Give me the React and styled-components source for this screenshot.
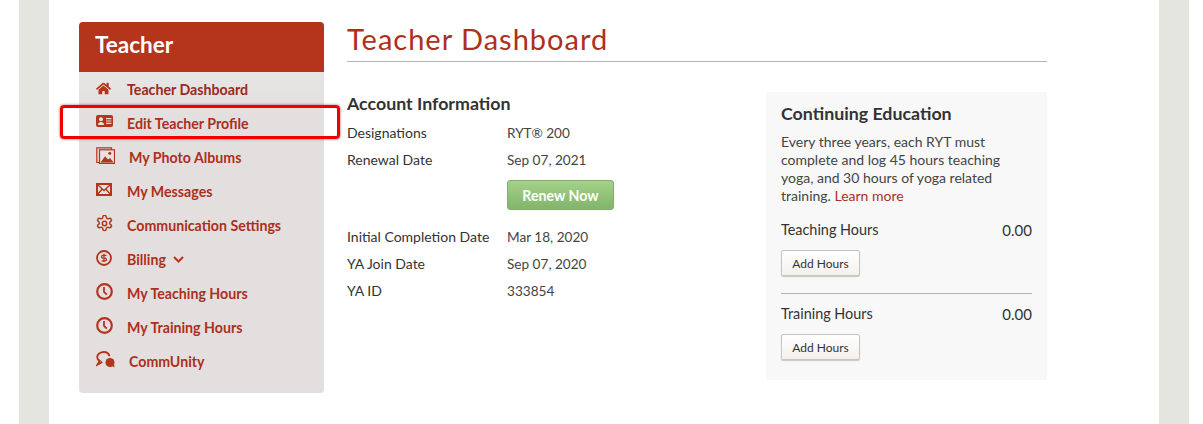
import React from 'react';
import styled, { createGlobalStyle } from 'styled-components';
import { FaHome } from 'react-icons/fa';

const colors = {
  rust: '#b5341c',
  link: '#ad2f1c',
  dark: '#333333',
  side: '#e5e5df',
};

const GlobalStyle = createGlobalStyle`
  html, body {
    margin: 0;
    padding: 0;
    background: #fff;
    font-family: Lato, "Open Sans", "Liberation Sans", sans-serif;
    overflow: hidden;
  }
  * { box-sizing: border-box; }
`;

const Page = styled.div`
  width: 1203px;
  height: 424px;
  overflow: hidden;
  padding-left: 19px;
`;

const Frame = styled.div`
  width: 1170px;
  height: 424px;
  border-left: 30px solid ${colors.side};
  border-right: 30px solid ${colors.side};
  background: #fff;
  padding: 22px 0 0 30px;
  display: flex;
  align-items: flex-start;
  gap: 23px;
`;

const Sidebar = styled.aside`
  position: relative;
  width: 245px;
  height: 371px;
  border-radius: 4px;
  background: linear-gradient(180deg, #ebebeb 0%, #e3dfdf 25%, #e3dfdf 100%);
`;

const SidebarHead = styled.h2`
  margin: 0;
  height: 50px;
  padding-left: 16px;
  background: ${colors.rust};
  border-radius: 4px 4px 0 0;
  color: #fff;
  font-size: 22.5px;
  font-weight: 700;
  line-height: 45px;
`;

const Menu = styled.ul`
  margin: 0;
  padding: 0;
  list-style: none;
`;

const MenuItem = styled.li`
  height: 34px;
  padding-left: 17px;
  display: flex;
  align-items: center;
  color: ${(p) => (p.$dark ? '#9c2a20' : colors.link)};
  font-size: 14.2px;
  font-weight: 700;
`;

const IconSlot = styled.span`
  width: ${(p) => p.$w || 31}px;
  height: 20px;
  flex: none;
  display: flex;
  align-items: flex-start;
  margin-top: ${(p) => p.$top}px;
  color: ${colors.rust};
  svg { display: block; }
`;

const Chevron = styled.svg`
  margin-left: 7px;
  margin-top: 1px;
`;

const Highlight = styled.div`
  position: absolute;
  left: -19px;
  top: 83px;
  width: 280px;
  height: 34px;
  border: 3px solid #f00000;
  border-radius: 4px;
  box-shadow: 0 0 3px rgba(120, 0, 0, 0.6);
`;

const Main = styled.main`
  width: 700px;
`;

const Title = styled.h1`
  margin: 0;
  height: 40px;
  border-bottom: 1px solid #b5b5b5;
  color: ${colors.link};
  font-size: 29px;
  font-weight: 400;
  line-height: 34px;
  letter-spacing: 1px;
`;

const Columns = styled.div`
  display: flex;
  justify-content: space-between;
  margin-top: 30px;
`;

const Account = styled.section`
  width: 400px;
`;

const SectionTitle = styled.h3`
  margin: 0 0 ${(p) => p.$gap || 0}px;
  color: ${colors.dark};
  font-size: 17.8px;
  font-weight: 700;
  line-height: 22px;
`;

const InfoRow = styled.div`
  display: flex;
  height: 27px;
  align-items: center;
  color: ${colors.dark};
  font-size: 14px;
`;

const InfoLabel = styled.span`
  width: 160px;
`;

const InfoValue = styled.span`
  color: #444;
  font-size: 13.6px;
`;

const ButtonRow = styled.div`
  padding: 7px 0 13px 160px;
`;

const RenewButton = styled.button`
  display: block;
  width: 107px;
  height: 30px;
  padding: 0;
  border: 1px solid #86ab6e;
  border-radius: 3px;
  background: linear-gradient(180deg, #a3d187 0%, #83b46c 100%);
  color: #fff;
  font-family: inherit;
  font-size: 14.2px;
  font-weight: 700;
`;

const Panel = styled.section`
  width: 281px;
  height: 288px;
  background: #f8f8f8;
  padding: 10px 15px 0;
`;

const PanelText = styled.p`
  margin: 9px 0 0;
  max-width: 235px;
  color: #444;
  font-size: 14px;
  line-height: 18px;
`;

const PanelLink = styled.a`
  color: ${colors.link};
`;

const HoursRow = styled.div`
  display: flex;
  justify-content: space-between;
  color: ${colors.dark};
  font-size: 14.4px;
  line-height: 18px;
  margin-top: ${(p) => p.$top}px;
`;

const HoursValue = styled.span`
  font-size: 15px;
`;

const AddButton = styled.button`
  display: block;
  width: 79px;
  height: 26px;
  margin-top: 11px;
  padding: 0;
  border: 1px solid #c9c4bd;
  border-radius: 2px;
  background: linear-gradient(180deg, #ffffff 0%, #f4f1ed 100%);
  box-shadow: 0 1px 1px rgba(0, 0, 0, 0.2);
  color: ${colors.dark};
  font-family: inherit;
  font-size: 12px;
`;

const Divider = styled.hr`
  margin: 17px 0 0;
  border: 0;
  border-top: 1px solid #b5b5b5;
`;

const IdCardIcon = () => (
  <svg width="17" height="12" viewBox="0 0 17 12">
    <rect width="17" height="12" rx="2" fill="currentColor" />
    <circle cx="5" cy="4.2" r="2" fill="#e6e2e2" />
    <path d="M2 10c0-2 1.3-3 3-3s3 1 3 3z" fill="#e6e2e2" />
    <path d="M10 3.6h5.4M10 6h5.4M10 8.4h5.4" stroke="#e6e2e2" strokeWidth="1.1" />
  </svg>
);

const PhotoIcon = () => (
  <svg width="19" height="17" viewBox="0 0 19 17">
    <path d="M3.5 15.5H.8V.8h14.7v2" fill="none" stroke="currentColor" strokeWidth="1.2" />
    <rect x="3.5" y="2.8" width="15" height="13.6" fill="#e6e2e2" stroke="currentColor" strokeWidth="1.2" />
    <circle cx="13.8" cy="6.3" r="1.5" fill="currentColor" />
    <path d="M4.5 15.4l4.6-6.2 2.9 3.2 2-1.5 3.6 4.5z" fill="currentColor" />
  </svg>
);

const MailIcon = () => (
  <svg width="16" height="13" viewBox="0 0 16 13">
    <rect x="1" y="1" width="14" height="11" fill="none" stroke="currentColor" strokeWidth="2" />
    <path d="M1.5 1.5L8 7.5l6.5-6M1.5 11.5l4.7-5.5M14.5 11.5L9.8 6" fill="none" stroke="currentColor" strokeWidth="1.3" />
  </svg>
);

const GearIcon = () => (
  <svg width="17" height="17" viewBox="1 1 22 22" fill="none" stroke="currentColor" strokeWidth="1.9">
    <path d="M12.2 1.5h-.4a2 2 0 0 0-2 2v.2a2 2 0 0 1-1 1.7l-.4.2a2 2 0 0 1-2 0l-.2-.1a2 2 0 0 0-2.7.7l-.2.4a2 2 0 0 0 .7 2.7l.2.1a2 2 0 0 1 1 1.7v.5a2 2 0 0 1-1 1.7l-.2.1a2 2 0 0 0-.7 2.7l.2.4a2 2 0 0 0 2.7.7l.2-.1a2 2 0 0 1 2 0l.4.2a2 2 0 0 1 1 1.7v.2a2 2 0 0 0 2 2h.4a2 2 0 0 0 2-2v-.2a2 2 0 0 1 1-1.7l.4-.2a2 2 0 0 1 2 0l.2.1a2 2 0 0 0 2.7-.7l.2-.4a2 2 0 0 0-.7-2.7l-.2-.1a2 2 0 0 1-1-1.7v-.5a2 2 0 0 1 1-1.7l.2-.1a2 2 0 0 0 .7-2.7l-.2-.4a2 2 0 0 0-2.7-.7l-.2.1a2 2 0 0 1-2 0l-.4-.2a2 2 0 0 1-1-1.7v-.2a2 2 0 0 0-2-2z" />
    <circle cx="12" cy="12" r="2.8" />
  </svg>
);

const DollarIcon = () => (
  <svg width="16" height="16" viewBox="0 0 16 16" fill="none" stroke="currentColor">
    <circle cx="8" cy="8" r="7" strokeWidth="1.8" />
    <path d="M10.5 5.4H6.9a1.3 1.3 0 0 0 0 2.7h2.2a1.3 1.3 0 0 1 0 2.7H5.5M8 3.8v8.4" strokeWidth="1.3" />
  </svg>
);

const ClockIcon = () => (
  <svg width="17" height="17" viewBox="0 0 17 17" fill="none" stroke="currentColor">
    <circle cx="8.5" cy="8.5" r="7.3" strokeWidth="2.2" />
    <path d="M8 4v4.8l2.8 2.8" strokeWidth="1.8" />
  </svg>
);

const ChatIcon = () => (
  <svg width="19" height="17" viewBox="0 0 19 17">
    <path d="M13.5 5.2C12.8 2.6 10.6 1 7.8 1 4.2 1 1.2 3.2 1.2 6c0 1.6 1 3 2.5 3.9L1.500 13.500l4.800-2.700" fill="none" stroke="currentColor" strokeWidth="1.9" />
    <circle cx="14" cy="11.5" r="4.5" fill="currentColor" />
    <path d="M16 15l2.500 1.500-.5-3.500z" fill="currentColor" />
  </svg>
);

const menuItems = [
  { label: 'Teacher Dashboard', icon: <FaHome size={15} />, dark: true, top: 3 },
  { label: 'Edit Teacher Profile', icon: <IdCardIcon />, top: 4 },
  { label: 'My Photo Albums', icon: <PhotoIcon />, slot: 33, top: 0 },
  { label: 'My Messages', icon: <MailIcon />, top: 4 },
  { label: 'Communication Settings', icon: <GearIcon />, top: 0 },
  { label: 'Billing', icon: <DollarIcon />, chevron: true, top: 2 },
  { label: 'My Teaching Hours', icon: <ClockIcon />, top: -1 },
  { label: 'My Training Hours', icon: <ClockIcon />, top: -1 },
  { label: 'CommUnity', icon: <ChatIcon />, slot: 33, top: 0 },
];

const App = () => (
  <Page>
    <GlobalStyle />
    <Frame>
      <Sidebar>
        <SidebarHead>Teacher</SidebarHead>
        <Menu>
          {menuItems.map((item) => (
            <MenuItem key={item.label} $dark={item.dark}>
              <IconSlot $w={item.slot} $top={item.top}>{item.icon}</IconSlot>
              {item.label}
              {item.chevron && (
                <Chevron width="11" height="7" viewBox="0 0 11 7" fill="none" stroke={colors.rust} strokeWidth="2">
                  <path d="M1 1l4.500 4.500L10 1" />
                </Chevron>
              )}
            </MenuItem>
          ))}
        </Menu>
        <Highlight />
      </Sidebar>
      <Main>
        <Title>Teacher Dashboard</Title>
        <Columns>
          <Account>
            <SectionTitle $gap={5}>Account Information</SectionTitle>
            <InfoRow><InfoLabel>Designations</InfoLabel><InfoValue>RYT® 200</InfoValue></InfoRow>
            <InfoRow><InfoLabel>Renewal Date</InfoLabel><InfoValue>Sep 07, 2021</InfoValue></InfoRow>
            <ButtonRow><RenewButton>Renew Now</RenewButton></ButtonRow>
            <InfoRow><InfoLabel>Initial Completion Date</InfoLabel><InfoValue>Mar 18, 2020</InfoValue></InfoRow>
            <InfoRow><InfoLabel>YA Join Date</InfoLabel><InfoValue>Sep 07, 2020</InfoValue></InfoRow>
            <InfoRow><InfoLabel>YA ID</InfoLabel><InfoValue>333854</InfoValue></InfoRow>
          </Account>
          <Panel>
            <SectionTitle>Continuing Education</SectionTitle>
            <PanelText>
              Every three years, each RYT must complete and log 45 hours teaching yoga, and 30 hours of yoga related training. <PanelLink>Learn more</PanelLink>
            </PanelText>
            <HoursRow $top={16}><span>Teaching Hours</span><HoursValue>0.00</HoursValue></HoursRow>
            <AddButton>Add Hours</AddButton>
            <Divider />
            <HoursRow $top={11}><span>Training Hours</span><HoursValue>0.00</HoursValue></HoursRow>
            <AddButton>Add Hours</AddButton>
          </Panel>
        </Columns>
      </Main>
    </Frame>
  </Page>
);

export default App;
